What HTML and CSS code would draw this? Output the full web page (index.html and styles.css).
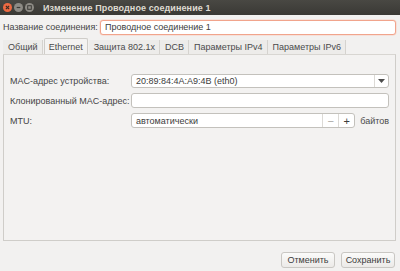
FILE: index.html
```html
<!DOCTYPE html>
<html lang="ru">
<head>
  <meta charset="UTF-8" />
  <title>Изменение Проводное соединение 1</title>
  <link rel="stylesheet" href="styles.css">
</head>
<body>

  <div class="titlebar">
    <div class="win-buttons">
      <span class="wb close">
        <svg width="10" height="10" viewBox="0 0 10 10"><path d="M3.2 3.2 L6.8 6.8 M6.8 3.2 L3.2 6.8" stroke="#3a2a22" stroke-width="1.3"/></svg>
      </span>
      <span class="wb">
        <svg width="10" height="10" viewBox="0 0 10 10"><path d="M3 5 H7" stroke="#3c3b37" stroke-width="1.3"/></svg>
      </span>
      <span class="wb">
        <svg width="10" height="10" viewBox="0 0 10 10"><rect x="3" y="3" width="4" height="4" fill="none" stroke="#3c3b37" stroke-width="1.1"/></svg>
      </span>
    </div>
    <div class="title">Изменение Проводное соединение 1</div>
  </div>

  <div class="content">
    <div class="name-row">
      <span class="label">Название соединения:</span>
      <div class="entry focused">Проводное соединение 1</div>
    </div>

    <div class="tabs">
      <span class="tab">Общий</span>
      <span class="tab active">Ethernet</span>
      <span class="tab">Защита 802.1x</span>
      <span class="tab">DCB</span>
      <span class="tab">Параметры IPv4</span>
      <span class="tab">Параметры IPv6</span>
    </div>

    <div class="panel">
      <div class="form">
        <span class="label">MAC-адрес устройства:</span>
        <div class="entry combo">
          <span class="combo-text">20:89:84:4A:A9:4B (eth0)</span>
          <span class="combo-arrow">
            <svg width="7" height="4" viewBox="0 0 7 4"><path d="M0 0 H7 L3.5 4 Z" fill="#4c4c4c"/></svg>
          </span>
        </div>

        <span class="label">Клонированный MAC-адрес:</span>
        <div class="entry"></div>

        <span class="label">MTU:</span>
        <div class="mtu">
          <div class="entry spin">
            <span class="spin-text">автоматически</span>
            <span class="spin-btn dim">−</span>
            <span class="spin-btn">+</span>
          </div>
          <span class="unit">байтов</span>
        </div>
      </div>
    </div>

    <div class="actions">
      <span class="btn">Отменить</span>
      <span class="btn">Сохранить</span>
    </div>
  </div>

</body>
</html>
```

FILE: styles.css
```css
/* ---------------- GENERAL ---------------- */
body, html {
  margin: 0;
  width: 400px;
  height: 271px;
  overflow: hidden;
  background: #f2f1f0;
  font-family: "Liberation Sans", "DejaVu Sans", sans-serif;
  font-size: 9px;
  color: #454545;
}

/* ---------------- TITLE BAR ---------------- */
.titlebar {
  height: 15px;
  display: flex;
  align-items: center;
  background: linear-gradient(#494843, #3a3935);
  color: #dfdbd2;
}

.win-buttons {
  display: flex;
  gap: 2px;
  padding-left: 3px;
}

.wb {
  width: 9px;
  height: 9px;
  border-radius: 50%;
  background: #8d8b85;
  display: flex;
  align-items: center;
  justify-content: center;
}

.wb svg {
  width: 9px;
  height: 9px;
}

.wb.close {
  background: #ee6a42;
}

.title {
  margin-left: 9px;
  font-weight: bold;
  font-size: 9px;
  letter-spacing: 0.1px;
}

/* ---------------- CONTENT ---------------- */
.content {
  padding: 5px 4px 0 3px;
}

.name-row {
  display: flex;
  align-items: center;
  height: 14px;
}

.name-row .label {
  width: 97px;
}

.entry {
  box-sizing: border-box;
  height: 15px;
  border: 1px solid #c3c1bc;
  border-radius: 3px;
  background: #fff;
  display: flex;
  align-items: center;
  padding-left: 4px;
  color: #3c3c3c;
}

.name-row .entry {
  flex: 1;
}

.entry.focused {
  border-color: #f1a48c;
  box-shadow: 0 0 0 0.5px #f8d2c5;
}

/* ---------------- TABS ---------------- */
.tabs {
  display: flex;
  margin-top: 5px;
  height: 15px;
  align-items: flex-end;
}

.tab {
  box-sizing: border-box;
  height: 14px;
  display: flex;
  align-items: center;
  padding: 0 4px 0 5px;
  border-right: 1px solid #d5d3cf;
  background: #edecea;
  color: #4a4a4a;
}

.tab.active {
  height: 16px;
  background: #f4f3f2;
  border: 1px solid #cfcdc9;
  border-bottom: none;
  border-radius: 2px 2px 0 0;
  margin: 0 1px;
  padding: 0 4px;
}

/* ---------------- PANEL ---------------- */
.panel {
  box-sizing: border-box;
  height: 187px;
  border: 1px solid #cfcdc9;
  border-top-color: #d8d6d2;
  background: #f3f2f1;
  padding: 19px 6px 0 6px;
}

.form {
  display: grid;
  grid-template-columns: 121px 1fr;
  row-gap: 5px;
  align-items: center;
}

.combo {
  justify-content: space-between;
  padding-right: 0;
  height: 14px;
}

.combo-arrow {
  box-sizing: border-box;
  width: 14px;
  height: 100%;
  border-left: 1px solid #dcdad6;
  display: flex;
  align-items: center;
  justify-content: center;
}

.mtu {
  display: flex;
  align-items: center;
  gap: 5px;
}

.spin {
  flex: 1;
  padding-right: 0;
}

.spin-text {
  flex: 1;
}

.spin-btn {
  box-sizing: border-box;
  width: 16px;
  height: 100%;
  border-left: 1px solid #dcdad6;
  display: flex;
  align-items: center;
  justify-content: center;
  font-size: 11px;
  color: #3c3c3c;
}

.spin-btn.dim {
  color: #a8a6a2;
}

.unit {
  color: #4a4a4a;
}

/* ---------------- ACTIONS ---------------- */
.actions {
  display: flex;
  justify-content: flex-end;
  gap: 6px;
  margin-top: 11px;
  padding-right: 1px;
}

.btn {
  box-sizing: border-box;
  height: 16px;
  width: 54px;
  display: flex;
  align-items: center;
  justify-content: center;
  border: 1px solid #c9c7c3;
  border-radius: 3px;
  background: linear-gradient(#fbfbfa, #eceae8);
  color: #3c3c3c;
}
```
